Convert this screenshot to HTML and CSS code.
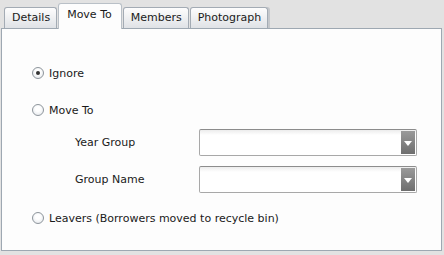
FILE: index.html
```html
<!DOCTYPE html>
<html lang="en">
<head>
  <meta charset="UTF-8">
  <title>Move To</title>
  <link rel="stylesheet" href="styles.css">
</head>
<body>
  <div class="window">
    <div class="tabs">
      <div class="tab">Details</div>
      <div class="tab active">Move To</div>
      <div class="tab">Members</div>
      <div class="tab last">Photograph</div>
    </div>

    <div class="panel">
      <label class="option">
        <span class="radio checked"></span>
        <span>Ignore</span>
      </label>

      <label class="option move">
        <span class="radio"></span>
        <span>Move To</span>
      </label>

      <div class="field">
        <span class="field-label">Year Group</span>
        <div class="combo"><span class="combo-btn"></span></div>
      </div>

      <div class="field">
        <span class="field-label">Group Name</span>
        <div class="combo"><span class="combo-btn"></span></div>
      </div>

      <label class="option last">
        <span class="radio"></span>
        <span>Leavers (Borrowers moved to recycle bin)</span>
      </label>
    </div>
  </div>
</body>
</html>
```

FILE: styles.css
```css
* {
  margin: 0;
  padding: 0;
  box-sizing: border-box;
}

body {
  font-family: "DejaVu Sans", Verdana, sans-serif;
  font-size: 11px;
  color: #1a1a1a;
  background: #e2e2e2;
  width: 444px;
  height: 255px;
}

.window {
  padding: 2px 2px 0 1px;
}

/* tab strip */
.tabs {
  display: flex;
  align-items: flex-end;
  height: 26px;
  padding-left: 3px;
}

.tab {
  height: 21px;
  padding: 0 6px 0 7px;
  line-height: 20px;
  border: 1px solid #a3abb4;
  border-bottom: none;
  border-radius: 3px 3px 0 0;
  background: linear-gradient(#fdfdfd, #dfe2e6);
  margin-right: 1px;
}

.tab.active {
  height: 26px;
  line-height: 22px;
  padding: 0 9px 0 8px;
  background: #fdfdfd;
  border-color: #b9c0c7;
  position: relative;
  top: 1px;
}

.tab.last {
  box-shadow: 2px 0 0 #c4c7cb;
}

/* content */
.panel {
  height: 223px;
  background: #fdfdfd;
  border: 1px solid #9ea8b2;
  padding: 37px 0 0 30px;
}

.option {
  display: flex;
  align-items: center;
  gap: 5px;
  height: 14px;
  margin-bottom: 23px;
}

.option.move {
  margin-bottom: 12px;
}

.option.last {
  margin-top: 18px;
}

.radio {
  width: 12px;
  height: 12px;
  border-radius: 50%;
  border: 1px solid #8e959c;
  background: radial-gradient(circle at 50% 40%, #ffffff 30%, #dfe3e8 100%);
  position: relative;
}

.radio.checked::after {
  content: "";
  position: absolute;
  left: 3px;
  top: 3px;
  width: 4px;
  height: 4px;
  border-radius: 50%;
  background: #333;
}

.field {
  display: flex;
  align-items: center;
  height: 27px;
  margin-bottom: 10px;
  padding-left: 43px;
}

.field-label {
  width: 124px;
}

.combo {
  width: 218px;
  height: 27px;
  border: 1px solid #a8a8a8;
  border-top-color: #8c8c8c;
  border-radius: 2px;
  background: linear-gradient(#ececec, #ffffff 5px);
  position: relative;
}

.combo-btn {
  position: absolute;
  right: 1px;
  top: 1px;
  bottom: 1px;
  width: 14px;
  background: linear-gradient(#9a9a9a, #6e6e6e);
}

.combo-btn::after {
  content: "";
  position: absolute;
  left: 3px;
  top: 10px;
  border-left: 4px solid transparent;
  border-right: 4px solid transparent;
  border-top: 5px solid #fff;
}
```
